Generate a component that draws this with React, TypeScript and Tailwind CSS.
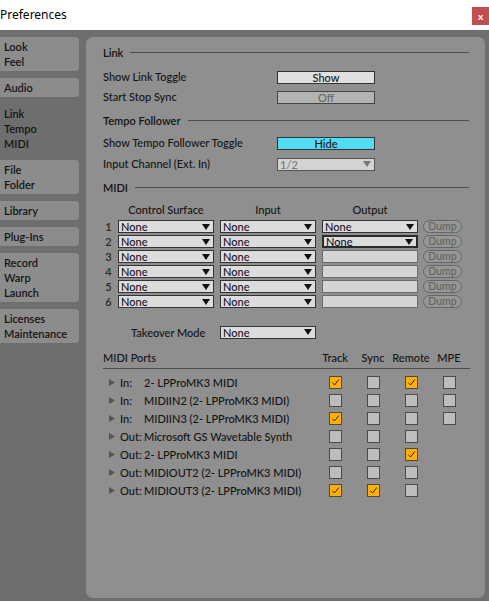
import React from 'react';

const FONT = { fontFamily: 'Lato, "Noto Sans", "Liberation Sans", sans-serif' };

const sidebarGroups = [
  ['Look', 'Feel'],
  ['Audio'],
  ['Link', 'Tempo', 'MIDI'],
  ['File', 'Folder'],
  ['Library'],
  ['Plug-Ins'],
  ['Record', 'Warp', 'Launch'],
  ['Licenses', 'Maintenance'],
];

// null = no box for that column
const ports: { dir: string; name: string; checks: (boolean | null)[] }[] = [
  { dir: 'In:', name: '2- LPProMK3 MIDI', checks: [true, false, true, false] },
  { dir: 'In:', name: 'MIDIIN2 (2- LPProMK3 MIDI)', checks: [false, false, false, false] },
  { dir: 'In:', name: 'MIDIIN3 (2- LPProMK3 MIDI)', checks: [true, false, false, false] },
  { dir: 'Out:', name: 'Microsoft GS Wavetable Synth', checks: [false, false, false, null] },
  { dir: 'Out:', name: '2- LPProMK3 MIDI', checks: [false, false, true, null] },
  { dir: 'Out:', name: 'MIDIOUT2 (2- LPProMK3 MIDI)', checks: [false, false, false, null] },
  { dir: 'Out:', name: 'MIDIOUT3 (2- LPProMK3 MIDI)', checks: [true, true, false, null] },
];

const Arrow = ({ color = '#111' }: { color?: string }) => (
  <svg width="8" height="6" viewBox="0 0 8 6">
    <path d="M0 0 L8 0 L4 6 Z" fill={color} />
  </svg>
);

const Dropdown = ({ value, focused }: { value?: string; focused?: boolean }) => {
  if (value === undefined) {
    return <div className="h-[13px] w-[96px] border border-[#6a6a6a] bg-[#d4d4d4]" />;
  }
  return (
    <div
      className={`flex h-[13px] w-[96px] items-center justify-between bg-[#dcdcdc] pl-[2px] pr-[3px] ${
        focused ? 'border-2 border-[#2a2a2a]' : 'border border-[#333]'
      }`}
    >
      <span className="text-[11px] leading-none text-[#161228]">{value}</span>
      <Arrow />
    </div>
  );
};

const SectionHeader = ({ title }: { title: string }) => (
  <div className="flex h-[14px] items-center gap-[7px]">
    <span className="text-[11px] font-semibold leading-none text-[#141414]">{title}</span>
    <div className="h-px flex-1 bg-[#4e4e4e]" />
  </div>
);

const Checkbox = ({ checked }: { checked: boolean }) => (
  <div
    className={`flex h-[13px] w-[13px] items-center justify-center border border-[#4a4a4a] ${
      checked ? 'bg-[#ffb000]' : 'bg-[#bdbdbd]'
    }`}
  >
    {checked && (
      <svg width="9" height="9" viewBox="0 0 9 9">
        <path d="M1.5 4.8 L3.5 7 L7.8 1.5" fill="none" stroke="#222" strokeWidth="1" />
      </svg>
    )}
  </div>
);

export default function App() {
  return (
    <div className="flex h-[601px] w-[489px] flex-col overflow-hidden bg-[#6e6e6e]" style={FONT}>
      {/* Title bar */}
      <div className="flex h-[30px] shrink-0 items-center justify-between bg-white">
        <span className="text-[12px] text-black" style={{ fontFamily: '"Noto Sans", sans-serif' }}>
          Preferences
        </span>
        <div className="mb-[-2px] flex h-[18px] w-[17px] items-center justify-center bg-[#c44d50] text-[10px] font-bold leading-none text-white">
          x
        </div>
      </div>

      <div className="flex flex-1 pt-[7px]">
        {/* Sidebar */}
        <div className="flex w-[79px] shrink-0 flex-col gap-[7px]">
          {sidebarGroups.map((group, i) => (
            <div
              key={i}
              className={`rounded-r-[4px] py-[2px] pl-[4px] ${i === 2 ? '' : 'bg-[#8c8c8c]'}`}
            >
              {group.map((item) => (
                <div key={item} className="text-[11px] font-semibold leading-[15px] text-[#141414]">
                  {item}
                </div>
              ))}
            </div>
          ))}
        </div>

        {/* Main panel */}
        <div className="ml-[7px] h-[561px] w-[399px] rounded-[7px] bg-[#8f8f8f] pl-[17px] pr-[16px] pt-[8px] text-[11px] font-medium text-[#141414]">
          <SectionHeader title="Link" />
          <div className="mt-[8px] flex h-[20px] items-center justify-between pr-[94px]">
            <span>Show Link Toggle</span>
            <div className="flex h-[13px] w-[98px] items-center justify-center border border-[#333] bg-[#e0e0e0] leading-none">
              Show
            </div>
          </div>
          <div className="flex h-[20px] items-center justify-between pr-[94px]">
            <span>Start Stop Sync</span>
            <div className="flex h-[13px] w-[98px] items-center justify-center border border-[#444] bg-[#b3b3b3] leading-none text-[#666]">
              Off
            </div>
          </div>

          <div className="mt-[6px]">
            <SectionHeader title="Tempo Follower" />
          </div>
          <div className="mt-[6px] flex h-[20px] items-center justify-between pr-[94px]">
            <span>Show Tempo Follower Toggle</span>
            <div className="flex h-[13px] w-[98px] items-center justify-center border border-[#333] bg-[#52dcf4] leading-none">
              Hide
            </div>
          </div>
          <div className="mt-[1px] flex h-[20px] items-center justify-between pr-[94px]">
            <span>Input Channel (Ext. In)</span>
            <div className="flex h-[13px] w-[98px] items-center justify-between border border-[#555] bg-[#d3d3d3] pl-[2px] pr-[3px] leading-none text-[#777]">
              <span>1/2</span>
              <Arrow color="#777" />
            </div>
          </div>

          <div className="mt-[6px]">
            <SectionHeader title="MIDI" />
          </div>

          {/* Control surface table */}
          <div className="mt-[8px] flex h-[14px] items-center pl-[15px] leading-none">
            <div className="w-[96px] text-center">Control Surface</div>
            <div className="ml-[6px] w-[96px] text-center">Input</div>
            <div className="ml-[6px] w-[96px] text-center">Output</div>
          </div>
          <div className="mt-[4px] flex flex-col gap-[2px]">
            {[1, 2, 3, 4, 5, 6].map((n) => (
              <div key={n} className="flex h-[13px] items-center leading-none">
                <span className="w-[11px] text-center font-semibold text-[#2a2a2a]">{n}</span>
                <div className="ml-[4px]">
                  <Dropdown value="None" />
                </div>
                <div className="ml-[6px]">
                  <Dropdown value="None" />
                </div>
                <div className="ml-[6px]">
                  {n <= 2 ? <Dropdown value="None" focused={n === 2} /> : <Dropdown />}
                </div>
                <div className="ml-[5px] flex h-[13px] w-[39px] items-center justify-center rounded-full border border-[#666] bg-[#979797] text-[10.5px] leading-none text-[#646464]">
                  Dump
                </div>
              </div>
            ))}
          </div>

          <div className="mt-[18px] flex h-[12px] items-center leading-none">
            <span className="ml-[28px] w-[89px]">Takeover Mode</span>
            <Dropdown value="None" />
          </div>

          {/* MIDI ports */}
          <div className="mt-[12px] flex h-[14px] items-center leading-none">
            <span className="w-[213px]">MIDI Ports</span>
            <div className="flex">
              {['Track', 'Sync', 'Remote', 'MPE'].map((h) => (
                <span key={h} className="w-[38px] text-center">
                  {h}
                </span>
              ))}
            </div>
          </div>
          <div className="mt-[4px] mr-[-1px] h-px bg-[#4e4e4e]" />
          <div className="mt-[4px] flex flex-col">
            {ports.map((p, i) => (
              <div key={i} className="flex h-[18px] items-center leading-none">
                <div className="flex w-[17px] justify-center">
                  <svg width="6" height="7" viewBox="0 0 6 7">
                    <path d="M0 0 L6 3.5 L0 7 Z" fill="#555" />
                  </svg>
                </div>
                <span className="w-[24px]">{p.dir}</span>
                <span className="w-[172px] whitespace-nowrap">{p.name}</span>
                <div className="flex">
                  {p.checks.map((c, j) => (
                    <div key={j} className="flex w-[38px] justify-center">
                      {c !== null && <Checkbox checked={c} />}
                    </div>
                  ))}
                </div>
              </div>
            ))}
          </div>
        </div>
      </div>
    </div>
  );
}
